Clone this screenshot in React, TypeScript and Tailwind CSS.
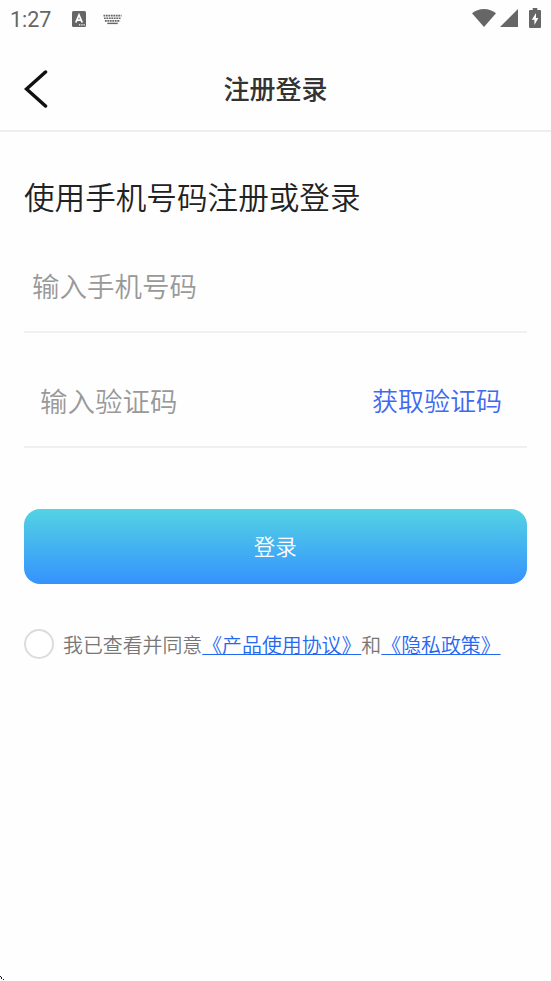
import { useState } from 'react';

function StatusBar() {
  return (
    <div className="flex h-[38px] items-center justify-between pl-[10px] pr-[10px] text-[#666666]">
      <div className="flex items-center">
        <span className="w-[62px] pt-[2px] font-[Roboto] text-[21.5px] font-normal leading-[36px]">1:27</span>
        <svg width="14" height="16" viewBox="0 0 14 16" className="shrink-0">
          <rect width="14" height="16" rx="1.5" fill="currentColor" />
          <path d="M3.8 11.5 7 4l3.2 7.5M4.9 9.2h4.2" fill="none" stroke="#fff" strokeWidth="1.8" />
          <path d="M7 13.2h1.3v1.3H7zM9.3 13.2h1.3v1.3H9.3zM11.5 13.2h1.3v1.3h-1.3z" fill="#fff" />
        </svg>
        <svg width="19" height="11" viewBox="0 0 20 11" className="ml-[17px] shrink-0">
          <path
            d="M.5 1.5h19M1 4.2h18M2 7h16"
            fill="none"
            stroke="currentColor"
            strokeWidth="1.8"
            strokeDasharray="1.9 .7"
          />
          <path d="M4.5 9.6h11" stroke="currentColor" strokeWidth="1.5" />
        </svg>
      </div>
      <div className="flex items-center pb-[2px]">
        <svg width="24" height="18" viewBox="0 0 24 18">
          <path d="M0 4.3C3.2 1.6 7.3 0 12 0s8.800 1.600 12 4.300L12 18z" fill="currentColor" />
        </svg>
        <svg width="18" height="18" viewBox="0 0 18 18" className="ml-[4px]">
          <path d="M18 0v18H0z" fill="currentColor" />
        </svg>
        <svg width="12" height="20" viewBox="0 0 12 20" className="ml-[11px]">
          <path
            d="M3.700 0h4.600v2H11q1 0 1 1v16q0 1-1 1H1q-1 0-1-1V3q0-1 1-1h2.700z"
            fill="currentColor"
          />
          <path d="M7 5 2.800 11.800h2.600V17l4-7H7z" fill="#fff" />
        </svg>
      </div>
    </div>
  );
}

export default function App() {
  const [phone, setPhone] = useState('');
  const [code, setCode] = useState('');
  const [agreed, setAgreed] = useState(false);

  return (
    <div className="relative flex h-[981px] w-[551px] flex-col overflow-hidden bg-[#fefefe] font-['Noto_Sans_CJK_SC',sans-serif] font-[350]">
      <StatusBar />

      {/* Header */}
      <header className="flex h-[94px] items-center border-b-2 border-[#eeeeee] px-6 pt-[9px]">
        <button aria-label="返回" className="w-12">
          <svg width="24" height="38" viewBox="0 0 24 38">
            <path
              d="M21.500 2 2.500 19l19 17"
              fill="none"
              stroke="#111"
              strokeWidth="3.500"
              strokeLinecap="round"
            />
          </svg>
        </button>
        <h1 className="grow pb-[2px] text-center text-[26px] font-medium leading-[38px] text-[#333333]">注册登录</h1>
        <div className="w-12"></div>
      </header>

      {/* Form */}
      <main className="flex flex-col pl-6 pr-[24.5px] pt-[42px]">
        <h2 className="text-[30.6px] leading-[44px] text-[#222222]">使用手机号码注册或登录</h2>

        <div className="mt-[26px] flex h-[89px] items-start border-b-2 border-[#f0f0f0] pl-2 pt-[22px]">
          <input
            className="h-10 w-full bg-transparent text-[27.5px] outline-none placeholder:text-[#999999]"
            placeholder="输入手机号码"
            value={phone}
            onChange={(e) => setPhone(e.target.value)}
          />
        </div>

        <div className="flex h-[115px] items-start justify-between border-b-2 border-[#f0f0f0] pl-4 pr-[24.5px] pt-[48px]">
          <input
            className="h-10 w-[260px] bg-transparent text-[27.5px] outline-none placeholder:text-[#999999]"
            placeholder="输入验证码"
            value={code}
            onChange={(e) => setCode(e.target.value)}
          />
          <button className="whitespace-nowrap text-[26px] leading-[38px] text-[#4169f0]">获取验证码</button>
        </div>

        <button className="mt-[61px] h-[75px] rounded-2xl bg-linear-to-b/srgb from-[#53d3e4] to-[#3592fd] text-[21.5px] text-white">
          登录
        </button>

        <div className="mt-[45px] flex items-center">
          <button
            aria-label="同意"
            className={
              agreed
                ? 'size-[30px] shrink-0 rounded-full border-2 border-[#3592fd] bg-[#3592fd]'
                : 'size-[30px] shrink-0 rounded-full border-2 border-[#dcdcdc] bg-white'
            }
            onClick={() => setAgreed(!agreed)}
          ></button>
          <p className="ml-[9px] whitespace-nowrap pt-[2px] text-[19.9px] leading-[28px] text-[#777777]">
            我已查看并同意
            <a href="#" className="text-[#2468f2] underline underline-offset-1">《产品使用协议》</a>
            和
            <a href="#" className="text-[#2468f2] underline underline-offset-1">《隐私政策》</a>
          </p>
        </div>
      </main>

      {/* Pointer tip */}
      <svg width="5" height="5" viewBox="0 0 5 5" className="absolute bottom-0 left-0">
        <path d="M0 0h1v1H0zM1 1h1v2H1zM3 3h1v1H3z" fill="#111" />
      </svg>
    </div>
  );
}
